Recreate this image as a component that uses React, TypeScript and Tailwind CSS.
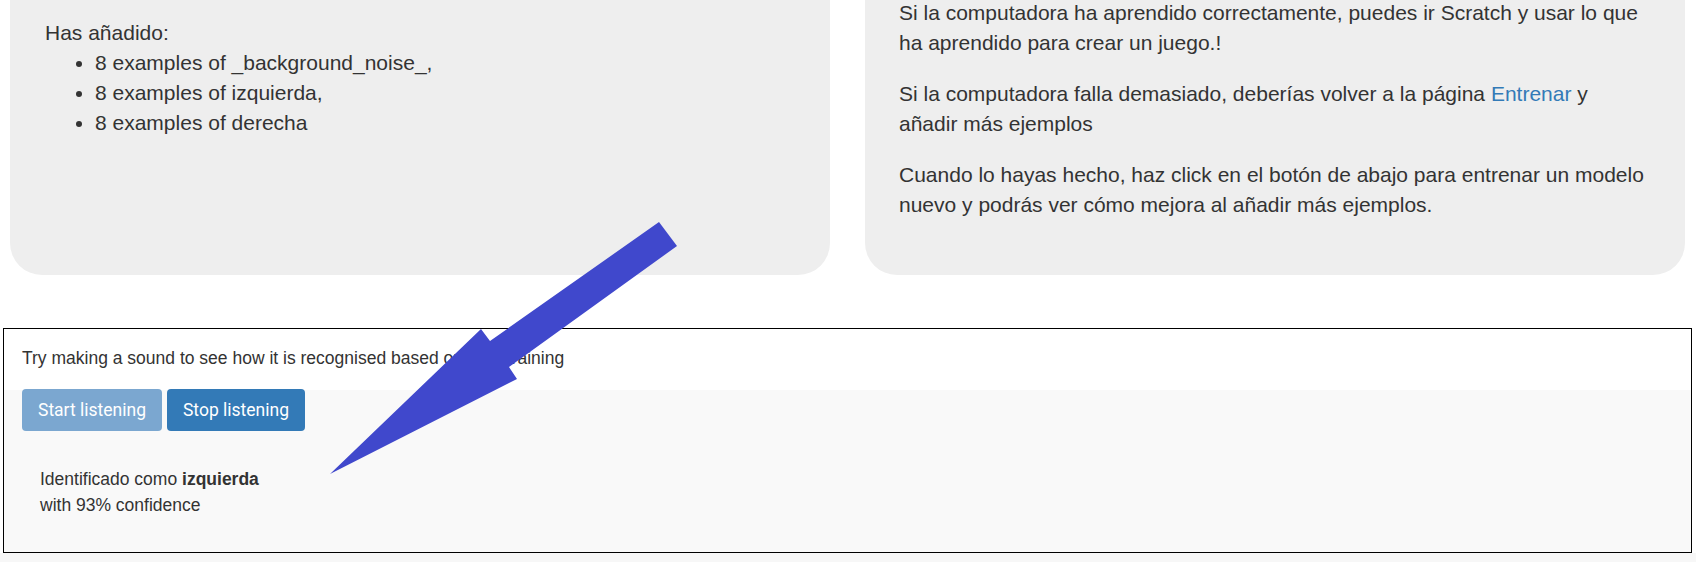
import React from 'react';

const examples = ['_background_noise_,', 'izquierda,', 'derecha'];

function Arrow() {
  // arrow drawn over the page, pointing at the result text
  return (
    <svg
      className="pointer-events-none absolute left-0 top-0"
      width={1696}
      height={562}
      viewBox="0 0 1696 562"
    >
      <polygon
        points="659,222 490,341 481,329 330,474 517,379 509,367 677,246"
        fill="#4048cc"
      />
    </svg>
  );
}

export default function App() {
  return (
    <div
      className="relative flex h-[562px] w-full flex-col overflow-hidden bg-white text-[#333333]"
      style={{ fontFamily: '"Liberation Sans", Arial, sans-serif' }}
    >
      <div className="-mt-[60px] flex h-[335px] shrink-0 gap-[35px] pl-[10px] text-[21px] leading-[30px]">
        <div className="w-[820px] shrink-0 rounded-b-[32px] bg-[#eeeeee] pl-[35px] pt-[78px]">
          <div>Has añadido:</div>
          <ul className="list-disc pl-[50px]">
            {examples.map((e) => (
              <li key={e}>8 examples of {e}</li>
            ))}
          </ul>
        </div>
        <div className="w-[820px] shrink-0 rounded-b-[32px] bg-[#eeeeee] pl-[34px] pr-[34px] pt-[58px]">
          <p className="mb-[21px]">
            Si la computadora ha aprendido correctamente, puedes ir Scratch y usar lo que ha
            aprendido para crear un juego.!
          </p>
          <p className="mb-[21px]">
            Si la computadora falla demasiado, deberías volver a la página{' '}
            <span className="text-[#337ab7]">Entrenar</span> y añadir más ejemplos
          </p>
          <p>
            Cuando lo hayas hecho, haz click en el botón de abajo para entrenar un modelo nuevo y
            podrás ver cómo mejora al añadir más ejemplos.
          </p>
        </div>
      </div>

      <div className="ml-[3px] mr-[4px] mt-[53px] flex h-[225px] shrink-0 flex-col border border-black">
        <div className="h-[61px] shrink-0 bg-white pl-[18px] pt-[17px] text-[17.5px] leading-[25px]">
          Try making a sound to see how it is recognised based on your training
        </div>
        <div className="flex-1 bg-[#f9f9f9]">
          <div
            className="-mt-px flex gap-[5px] pl-[18px] text-[17.5px] text-white"
            style={{ fontFamily: 'Roboto, "Liberation Sans", sans-serif' }}
          >
            <button className="h-[42px] w-[140px] rounded-[4px] bg-[#7ba7d0]">Start listening</button>
            <button className="h-[42px] w-[138px] rounded-[4px] bg-[#337ab7]">Stop listening</button>
          </div>
          <div className="mt-[35px] pl-[36px] text-[17.5px] leading-[26px]">
            <div>
              Identificado como <b>izquierda</b>
            </div>
            <div>with 93% confidence</div>
          </div>
        </div>
      </div>
      <div className="flex-1 bg-[#f7f7f7]" />

      <Arrow />
    </div>
  );
}
